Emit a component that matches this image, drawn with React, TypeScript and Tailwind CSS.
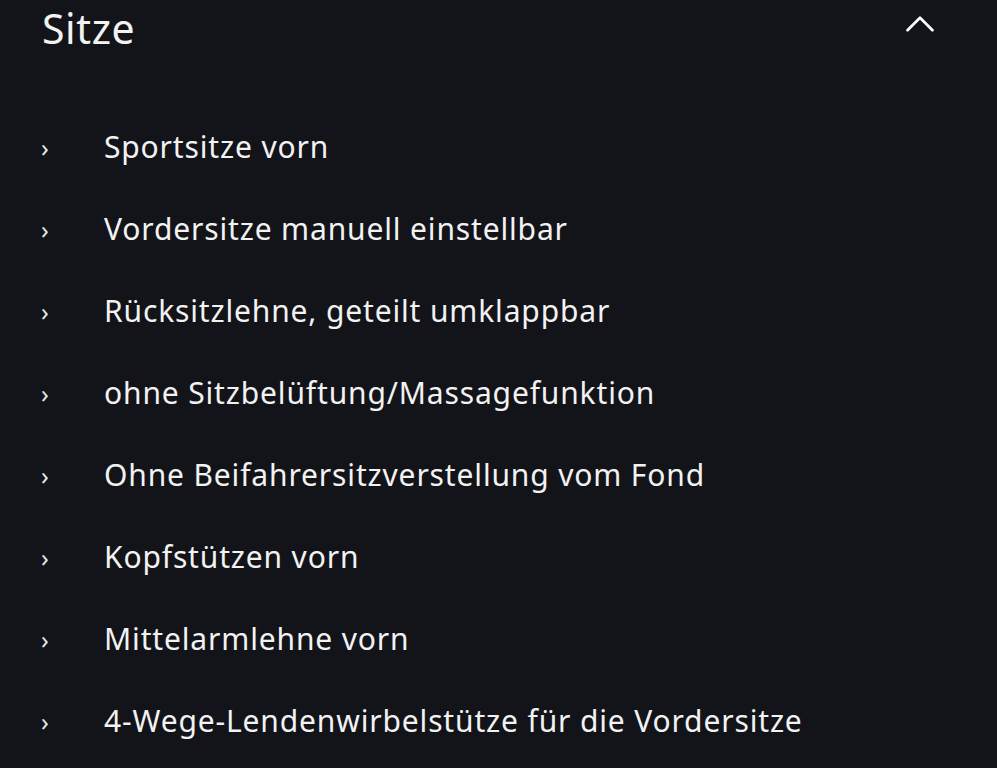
import { ChevronUp } from "lucide-react";

const items = [
  "Sportsitze vorn",
  "Vordersitze manuell einstellbar",
  "Rücksitzlehne, geteilt umklappbar",
  "ohne Sitzbelüftung/Massagefunktion",
  "Ohne Beifahrersitzverstellung vom Fond",
  "Kopfstützen vorn",
  "Mittelarmlehne vorn",
  "4-Wege-Lendenwirbelstütze für die Vordersitze",
];

const App = () => {
  return (
    <div
      className="w-[997px] h-[768px] overflow-hidden bg-[#131419] text-[#f2f2f2]"
      style={{ fontFamily: '"Noto Sans", "Open Sans", sans-serif' }}
    >
      <div className="flex items-center justify-between pl-[42px] pr-[52px] h-[56px]">
        <h2 className="text-[41px] leading-none font-normal tracking-[0.6px]">Sitze</h2>
        <ChevronUp className="w-[50px] h-[50px] text-white -mt-[8px]" strokeWidth={1.3} />
      </div>
      <ul className="flex flex-col pt-[50px]">
        {items.map((item) => (
          <li key={item} className="flex items-center h-[82px]">
            <span className="w-[62px] pl-[41px] text-[25px] leading-none text-[#e6e6e6]">›</span>
            <span className="pl-[42px] text-[30px] leading-none tracking-[0.85px]">{item}</span>
          </li>
        ))}
      </ul>
    </div>
  );
};

export default App;
